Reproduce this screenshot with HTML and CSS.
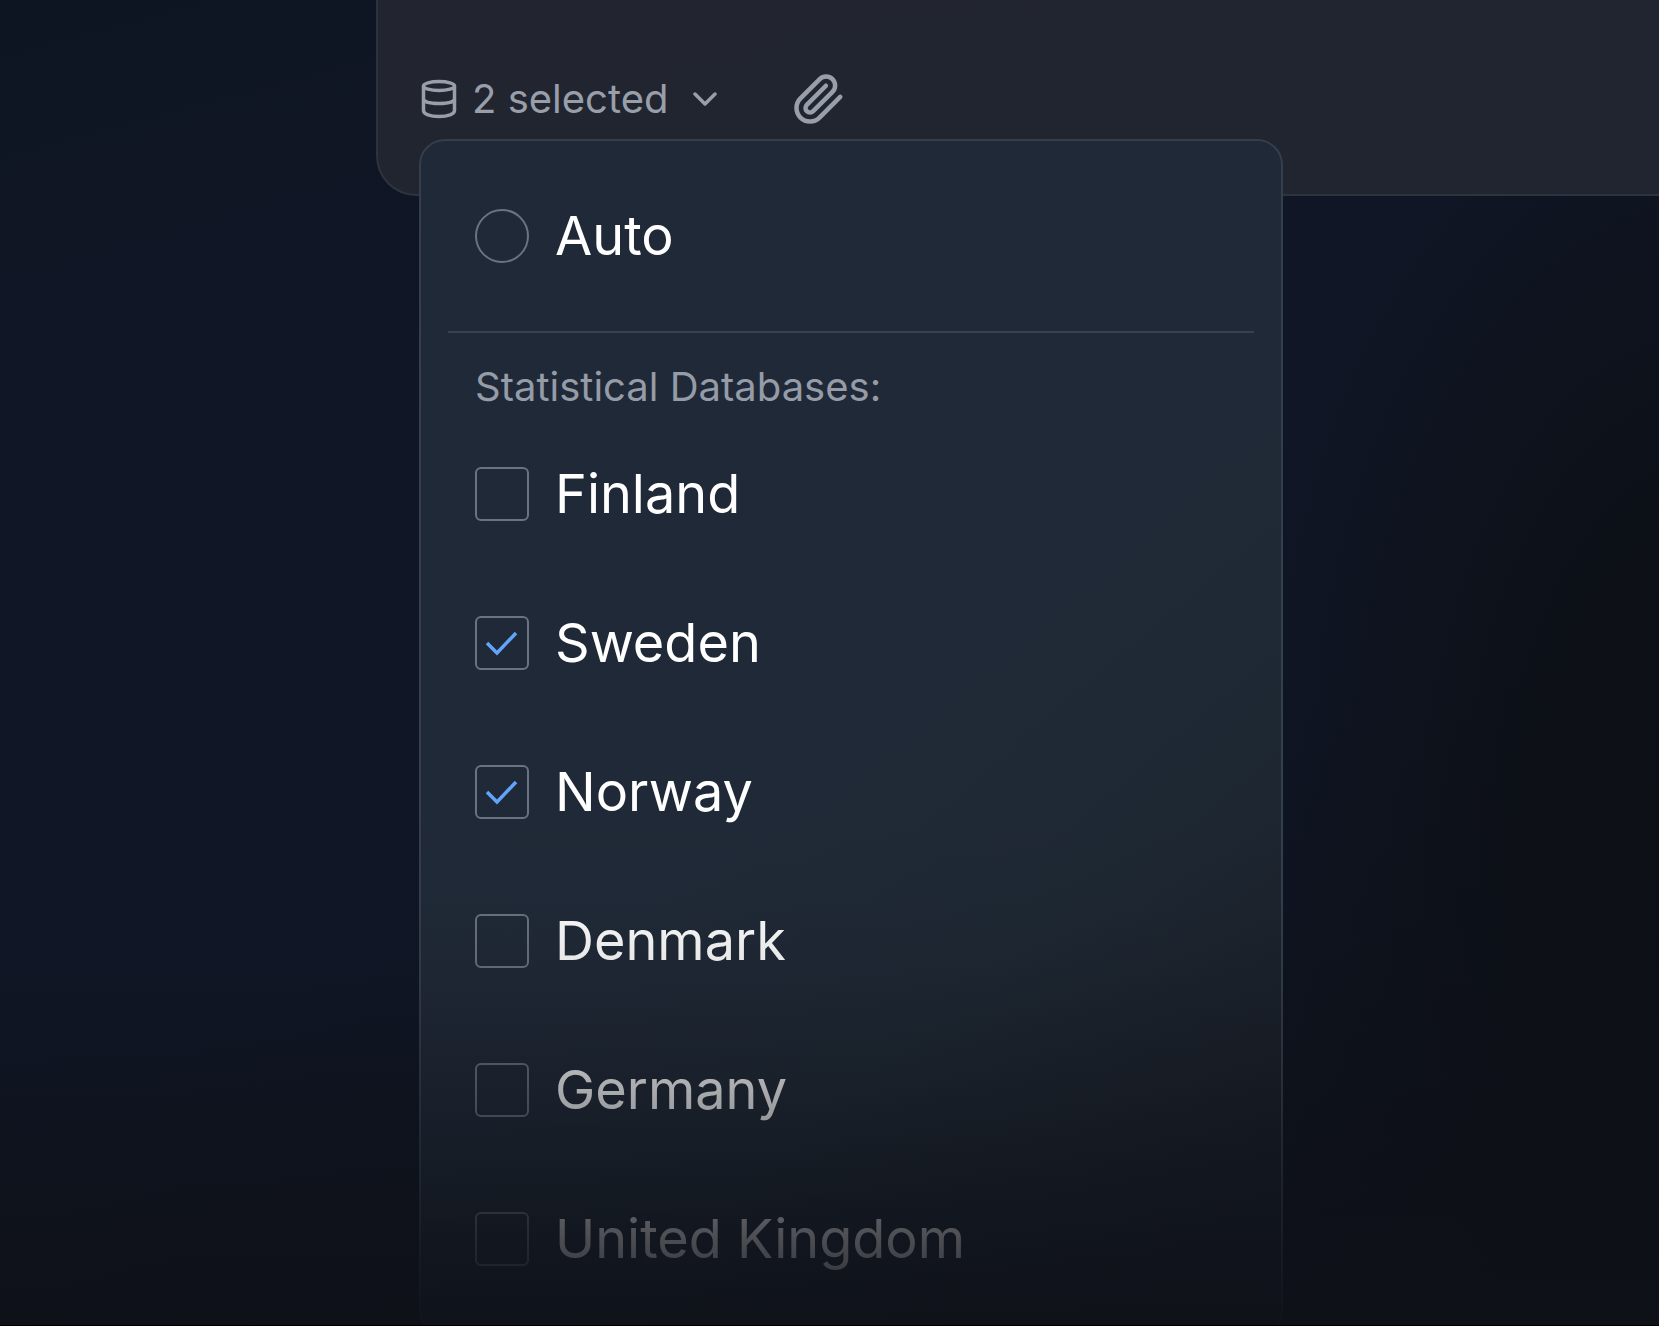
FILE: index.html
```html
<!DOCTYPE html>
<html lang="en">
<head>
<meta charset="utf-8">
<meta name="viewport" content="width=device-width, initial-scale=1">
<title>Database selection</title>
<link rel="stylesheet" href="styles.css">
</head>
<body>
<main class="page">
  <section class="composer">
    <div class="toolbar">
      <div class="picker">
        <button class="trigger" type="button" aria-haspopup="true" aria-expanded="true">
          <svg class="icon-db" viewBox="0 0 38 40" fill="none" stroke="currentColor" stroke-width="3.500" aria-hidden="true">
            <ellipse cx="20" cy="7" rx="15.500" ry="4.500"/>
            <path d="M4.500 7v24.500c0 3.500 6.500 6 15.500 6s15.500-2.500 15.500-6V7"/>
            <path d="M4.500 20c0 3 6.500 4.500 15.500 4.500s15.500-1.500 15.500-4.500"/>
          </svg>
          <span>2 selected</span>
          <svg class="icon-chevron" viewBox="0 0 26 16" fill="none" stroke="currentColor" stroke-width="3.500" stroke-linecap="round" stroke-linejoin="round" aria-hidden="true"><path d="M4 3l10 10L24 3"/></svg>
        </button>
        <form class="menu">
          <label class="option"><input class="mark mark-round" type="radio" name="mode"><span class="option-text">Auto</span></label>
          <hr class="divider">
          <fieldset class="group">
            <legend class="group-title">Statistical Databases:</legend>
            <label class="option"><input class="mark" type="checkbox"><span class="option-text">Finland</span></label>
            <label class="option"><input class="mark" type="checkbox" checked><span class="option-text">Sweden</span></label>
            <label class="option"><input class="mark" type="checkbox" checked><span class="option-text">Norway</span></label>
            <label class="option"><input class="mark" type="checkbox"><span class="option-text">Denmark</span></label>
            <label class="option"><input class="mark" type="checkbox"><span class="option-text">Germany</span></label>
            <label class="option"><input class="mark" type="checkbox"><span class="option-text">United Kingdom</span></label>
          </fieldset>
        </form>
      </div>
      <button class="attach" type="button" aria-label="Attach file">
        <svg class="icon-clip" viewBox="0 0 24 24" fill="none" stroke="currentColor" stroke-width="2" stroke-linecap="round" stroke-linejoin="round" aria-hidden="true"><path d="m21.440 11.050-9.190 9.190a6 6 0 0 1-8.490-8.490l8.570-8.570A4 4 0 1 1 18 8.840l-8.590 8.570a2 2 0 0 1-2.830-2.830l8.490-8.480"/></svg>
      </button>
    </div>
  </section>
  <div class="fade"></div>
</main>
</body>
</html>
```
FILE: styles.css
```css
* { box-sizing: border-box; }

body {
  margin: 0;
  background: #0d1017;
  font-family: Inter, "Liberation Sans", sans-serif;
  color: #fff;
}

.page {
  position: relative;
  height: 100vh;
  overflow: hidden;
  padding-left: 376px;
  border-bottom: 1px solid #000;
  background:
    radial-gradient(ellipse 30% 60% at 104% 60%, #0c0f14 0%, #0c0f14cc 40%, #0c0f1400 100%),
    linear-gradient(165deg, #0e1522 0%, #101626 30%, #101626 60%, #0d1018 92%);
}

.composer {
  border: solid #2d333f;
  border-width: 0 0 2px 2px;
  border-bottom-left-radius: 40px;
  background: linear-gradient(170deg, #22252f, #20252f);
  padding: 72px 40px 68px 41px;
}

.toolbar { display: flex; align-items: center; gap: 75px; height: 54px; }

.picker { position: relative; }

button {
  border: 0;
  padding: 0;
  background: none;
  color: #989eaa;
  font: inherit;
}

.trigger {
  display: flex;
  align-items: center;
  gap: 15px;
  font-size: 40px;
  line-height: 54px;
}

svg { display: block; }
.icon-db { width: 38px; height: 40px; }
.icon-chevron { width: 26px; height: 16px; margin-left: 8px; }
.icon-clip { width: 54px; height: 54px; }

.menu {
  position: absolute;
  top: 67px;
  left: 0;
  width: 864px;
  border: 2px solid #343e4c;
  border-radius: 26px;
  padding: 27px;
  background: linear-gradient(140deg, #202937 0%, #202937 50%, #1e2833 68%, #1b212b 82%, #171c25 92%);
}

.option {
  display: flex;
  align-items: center;
  gap: 26px;
  height: 136px;
  padding: 0 27px;
  font-size: 54px;
}

.option-text { padding-bottom: 2px; }

.group { margin: 0; border: 0; padding: 0; min-width: 0; }
.group .option + .option { margin-top: 13px; }

.group-title {
  padding: 14px 27px 12px;
  color: #959ba7;
  font-size: 40px;
  line-height: 54px;
}

.divider { height: 2px; margin: 27px 0 13px; border: 0; background: #374151; }

.mark {
  appearance: none;
  flex: none;
  display: grid;
  place-items: center;
  width: 54px;
  height: 54px;
  margin: 0;
  border: 2px solid #6b7280;
  border-radius: 6px;
}

.mark-round { border-radius: 50%; }

.mark:checked::before {
  content: "";
  width: 32px;
  height: 32px;
  background: url("data:image/svg+xml,%3Csvg xmlns='http://www.w3.org/2000/svg' viewBox='0 0 32 32' fill='none' stroke='%2360a5fa' stroke-width='3.500'%3E%3Cpath d='M1 16l10 10L30 6'/%3E%3C/svg%3E");
}

.fade {
  position: absolute;
  inset: 60% 0 0;
  pointer-events: none;
  background: linear-gradient(#0e111800 0%, #0e111808 20%, #0e11181a 32%, #0e111858 55%, #0e1118bf 84%, #0e1118f2 100%);
}
```
